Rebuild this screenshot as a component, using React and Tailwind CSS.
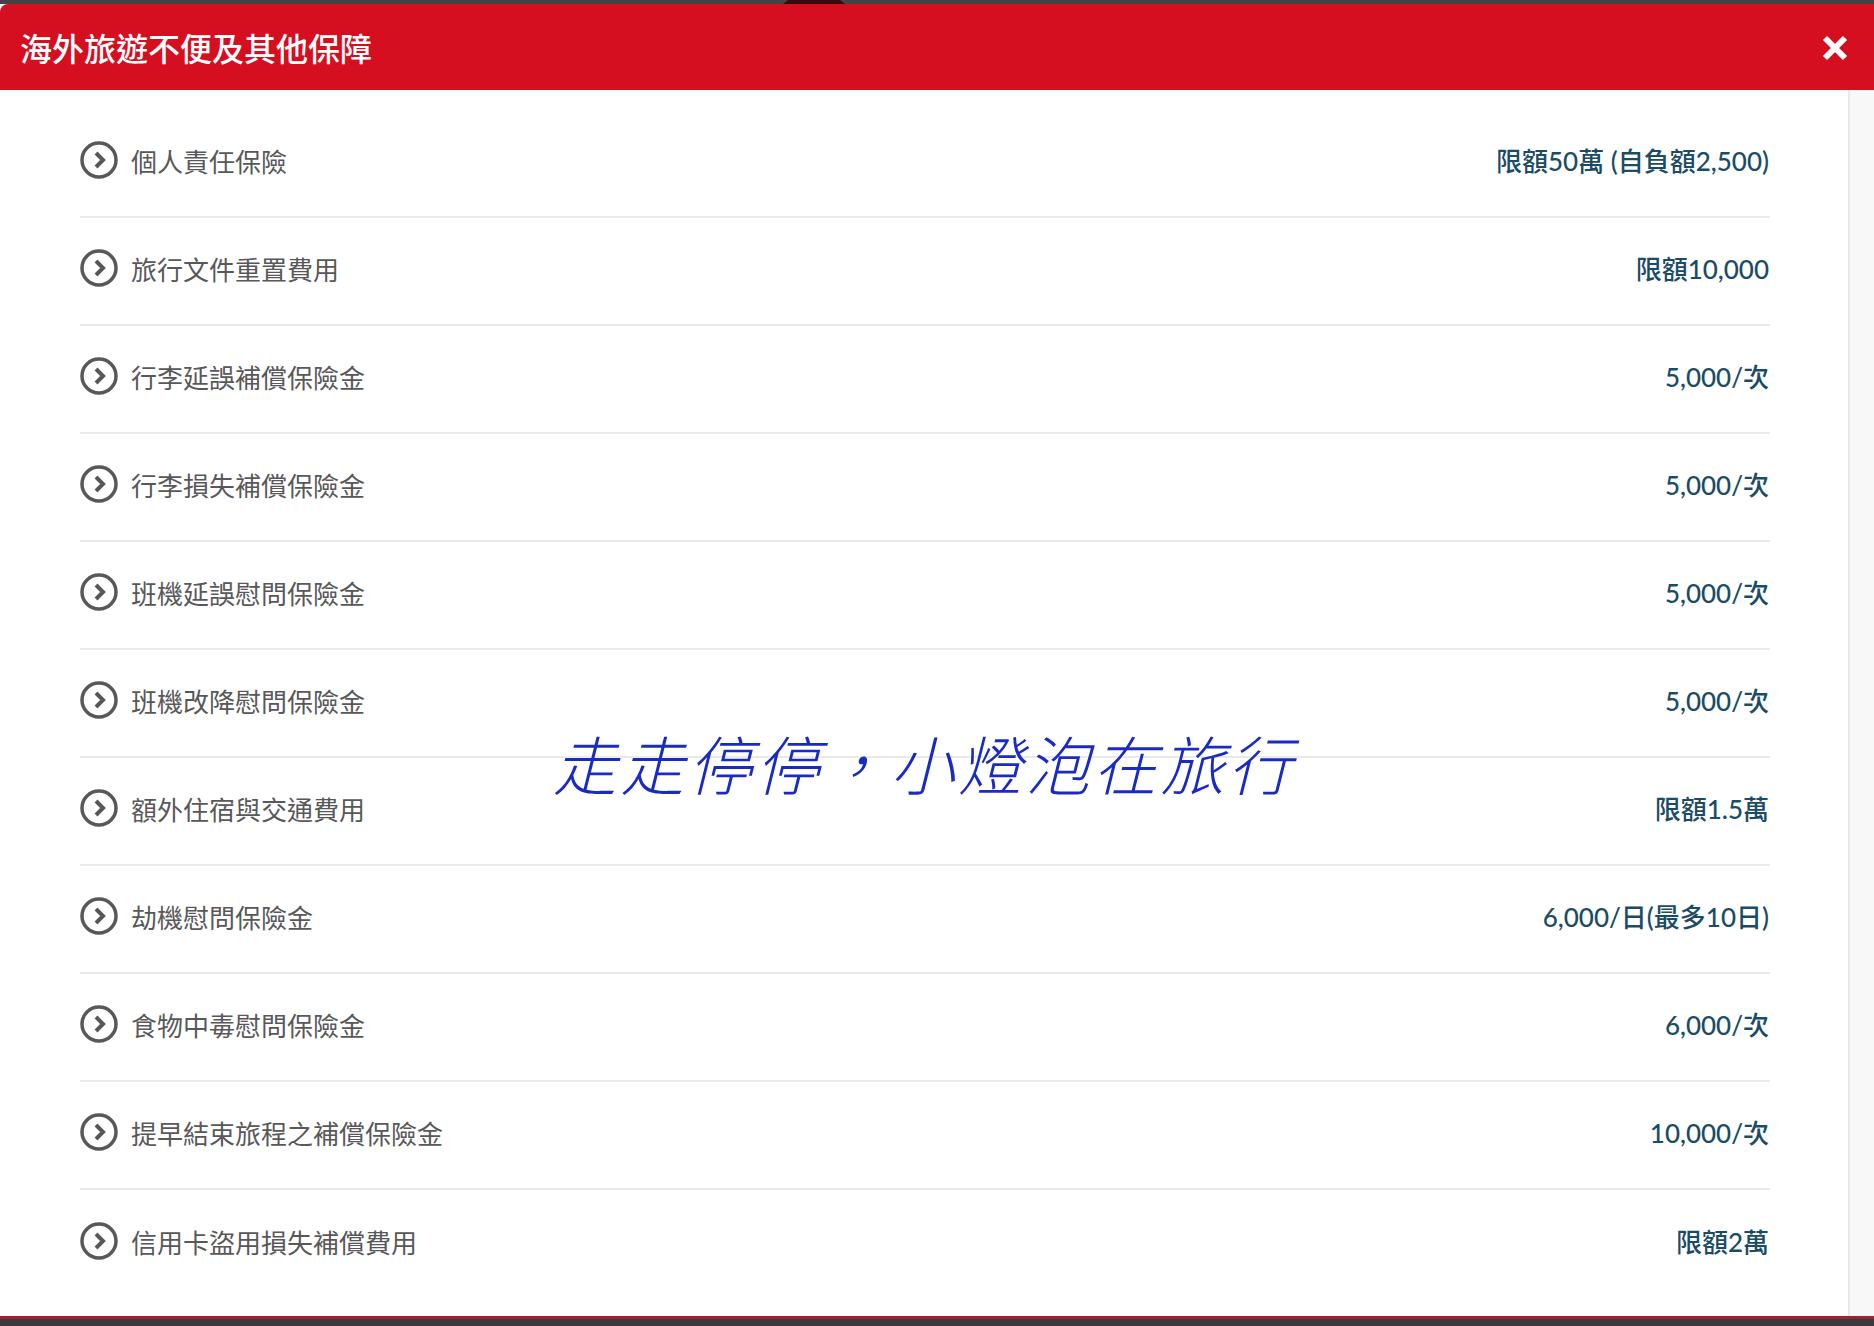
const ROWS = [
  ['個人責任保險', '限額50萬 (自負額2,500)'],
  ['旅行文件重置費用', '限額10,000'],
  ['行李延誤補償保險金', '5,000/次'],
  ['行李損失補償保險金', '5,000/次'],
  ['班機延誤慰問保險金', '5,000/次'],
  ['班機改降慰問保險金', '5,000/次'],
  ['額外住宿與交通費用', '限額1.5萬'],
  ['劫機慰問保險金', '6,000/日(最多10日)'],
  ['食物中毒慰問保險金', '6,000/次'],
  ['提早結束旅程之補償保險金', '10,000/次'],
  ['信用卡盜用損失補償費用', '限額2萬'],
]

function ArrowCircle() {
  return (
    <svg viewBox="0 0 38 38" className="w-[38px] h-[38px] shrink-0 -mt-[2px]">
      <circle cx="19" cy="19" r="17" fill="none" stroke="#58585a" strokeWidth="3.5" />
      <path d="M16 12 L23 19 L16 26" fill="none" stroke="#58585a" strokeWidth="4" />
    </svg>
  )
}

function Row({ name, amount, last }) {
  return (
    <div className={`h-[108px] flex items-center justify-between pb-[4px] ${last ? '' : 'border-b-2 border-[#e9e9e9]'}`}>
      <div className="flex items-center gap-[13px]">
        <ArrowCircle />
        <span className="text-[26px] leading-[36px] text-[#58585a]">{name}</span>
      </div>
      <span className="text-[26px] leading-[36px] font-medium text-[#1a4c66] font-['Lato','Noto_Sans_CJK_TC',sans-serif] pr-[1px]">{amount}</span>
    </div>
  )
}

export default function App() {
  return (
    <div className="w-[1874px] h-[1326px] flex flex-col overflow-hidden bg-white font-['Noto_Sans_CJK_TC','Noto_Sans',sans-serif]">
      <div className="h-[4px] bg-[#444444] pl-[783px]">
        <div className="w-[62px] h-[4px] bg-[#3b0a0c] [clip-path:polygon(8%_0,92%_0,100%_100%,0_100%)]" />
      </div>

      <div className="h-[86px] shrink-0 bg-[#d50e20] rounded-tl-[8px] flex items-center justify-between pl-[20px] pr-[26px]">
        <h1 className="text-[32px] leading-[40px] font-medium text-white">海外旅遊不便及其他保障</h1>
        <svg viewBox="0 0 26 26" className="w-[26px] h-[26px] mt-[2px]">
          <path d="M3 3 L23 23 M23 3 L3 23" fill="none" stroke="#ffffff" strokeWidth="6" />
        </svg>
      </div>

      <div className="relative flex-1 flex min-h-0">
        <div className="w-[1848px] pt-[20px] pl-[80px] pr-[78px]">
          {ROWS.map((r, i) => (
            <Row key={r[0]} name={r[0]} amount={r[1]} last={i === ROWS.length - 1} />
          ))}
        </div>
        <div className="flex-1 border-l-2 border-[#e9e9e9] bg-[#f8f8f8]" />

        <div className="absolute left-[553px] top-[630px] w-[745px] text-[64px] leading-[84px] font-light italic whitespace-nowrap tracking-[3.5px] text-[#1a2bc4] [text-shadow:0_0_3px_#ffffff]">
          {'走走停停\uFF0C小燈泡在旅行'}
        </div>
      </div>

      <div className="h-[3px] shrink-0 bg-[#a3202f]" />
      <div className="h-[7px] shrink-0 bg-[#3a3a3c]" />
    </div>
  )
}
